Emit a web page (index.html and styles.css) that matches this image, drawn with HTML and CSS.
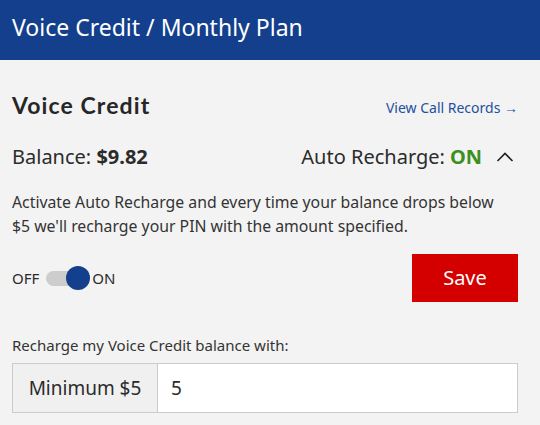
FILE: index.html
```html
<!DOCTYPE html>
<html>
<head>
<meta charset="utf-8">
<link rel="stylesheet" href="styles.css">
</head>
<body>
<header class="topbar">Voice Credit / Monthly Plan</header>
<main class="content">
  <div class="title-row">
    <h2 class="title">Voice Credit</h2>
    <a class="records" href="#">View Call Records &#x2192;</a>
  </div>
  <div class="status-row">
    <div class="balance">Balance: <b>$9.82</b></div>
    <div class="auto">Auto Recharge: <b class="on">ON</b>
      <svg class="chev" width="18" height="12" viewBox="0 0 18 12"><path d="M1.5 10 L9 2.5 L16.5 10" fill="none" stroke="#222" stroke-width="1.6"/></svg>
    </div>
  </div>
  <p class="desc">Activate Auto Recharge and every time your balance drops below $5 we'll recharge your PIN with the amount specified.</p>
  <div class="toggle-row">
    <div class="toggle">
      <span>OFF</span>
      <span class="track"><span class="knob"></span></span>
      <span>ON</span>
    </div>
    <button class="save">Save</button>
  </div>
  <label class="lbl">Recharge my Voice Credit balance with:</label>
  <div class="group">
    <span class="addon">Minimum $5</span>
    <span class="input">5</span>
  </div>
</main>
</body>
</html>
```
FILE: styles.css
```css
* { box-sizing: border-box; }
body {
  margin: 0;
  background: #f3f3f3;
  font-family: "Noto Sans", "Open Sans", sans-serif;
  color: #2b2b2b;
}
.topbar {
  height: 60px;
  background: #133f8d;
  color: #fff;
  font-size: 23px;
  padding: 0 12px 6px;
  display: flex;
  align-items: center;
}
.content { padding: 0 22px 0 12px; }
.title-row {
  display: flex;
  justify-content: space-between;
  align-items: flex-end;
  margin-top: 31px;
}
.title {
  margin: 0;
  font-family: "Lato", sans-serif;
  font-weight: 700;
  font-size: 23px;
  letter-spacing: 1.1px;
  color: #262626;
  line-height: 28px;
}
.records {
  font-size: 14px;
  color: #23509c;
  text-decoration: none;
  margin-bottom: 2px;
}
.status-row {
  display: flex;
  justify-content: space-between;
  align-items: center;
  margin-top: 24px;
  font-size: 18px;
  line-height: 28px;
}
.balance { font-size: 20px; }
.balance b { font-weight: 700; }
.auto { display: flex; align-items: center; font-size: 20px; color: #2b2b2b; }
.on { color: #3d8f1e; margin-left: 5px; font-weight: 700; }
.chev { margin-left: 14px; margin-right: 4px; }
.desc {
  margin: 19px 0 0;
  padding-right: 12px;
  font-size: 15.8px;
  line-height: 24px;
  color: #333;
}
.toggle-row {
  display: flex;
  justify-content: space-between;
  align-items: center;
  margin-top: 16px;
}
.toggle { display: flex; align-items: center; font-size: 15px; color: #2b2b2b; }
.track {
  position: relative;
  width: 40px;
  height: 15px;
  background: #cdcdcd;
  border-radius: 8px;
  margin: 0 6px 0 7px;
}
.knob {
  position: absolute;
  right: -4px;
  top: -5px;
  width: 24px;
  height: 24px;
  border-radius: 50%;
  background: #133f8d;
}
.save {
  width: 106px;
  height: 48px;
  background: #d40000;
  color: #fff;
  border: 0;
  font-family: "Noto Sans", sans-serif;
  font-size: 20px;
  padding: 0 0 2px;
}
.lbl {
  display: block;
  margin-top: 33px;
  font-size: 15px;
  color: #333;
  line-height: 20px;
}
.group {
  display: flex;
  margin-top: 8px;
  height: 50px;
  border: 1px solid #cccccc;
  background: #fff;
}
.addon {
  width: 145px;
  background: #f0f0f0;
  border-right: 1px solid #cccccc;
  display: flex;
  align-items: center;
  justify-content: center;
  font-size: 19px;
  color: #2b2b2b;
}
.input {
  display: flex;
  align-items: center;
  padding-left: 13px;
  font-size: 19px;
  color: #2b2b2b;
}
```
